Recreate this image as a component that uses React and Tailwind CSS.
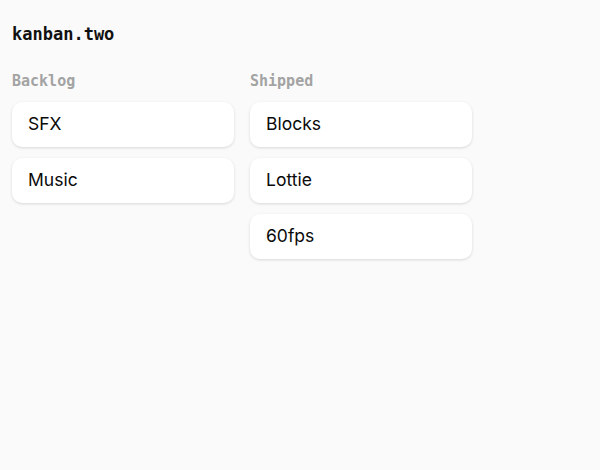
import React from 'react';

const columns = [
  { title: 'Backlog', cards: ['SFX', 'Music'] },
  { title: 'Shipped', cards: ['Blocks', 'Lottie', '60fps'] },
];

const mono = { fontFamily: '"DejaVu Sans Mono", "Liberation Mono", monospace' };

export default function App() {
  return (
    <div className="min-h-[470px] w-full bg-[#fafafa] px-3 pt-[22px]">
      <h1 className="text-[17px] font-bold leading-6 text-[#111]" style={mono}>
        kanban.two
      </h1>
      <div className="mt-[25px] flex gap-4">
        {columns.map((col) => (
          <div key={col.title} className="flex w-[222px] flex-col">
            <h2 className="text-[15px] font-bold leading-5 text-[#a3a3a3]" style={mono}>
              {col.title}
            </h2>
            <div className="mt-[11px] flex flex-col gap-[11px]">
              {col.cards.map((c) => (
                <div
                  key={c}
                  className="flex h-[45px] items-center rounded-[10px] bg-white px-4 text-[17.5px] text-[#0a0a0a] shadow-[0_1px_3px_rgba(0,0,0,0.14)] font-['Inter',sans-serif]"
                >
                  {c}
                </div>
              ))}
            </div>
          </div>
        ))}
      </div>
    </div>
  );
}
